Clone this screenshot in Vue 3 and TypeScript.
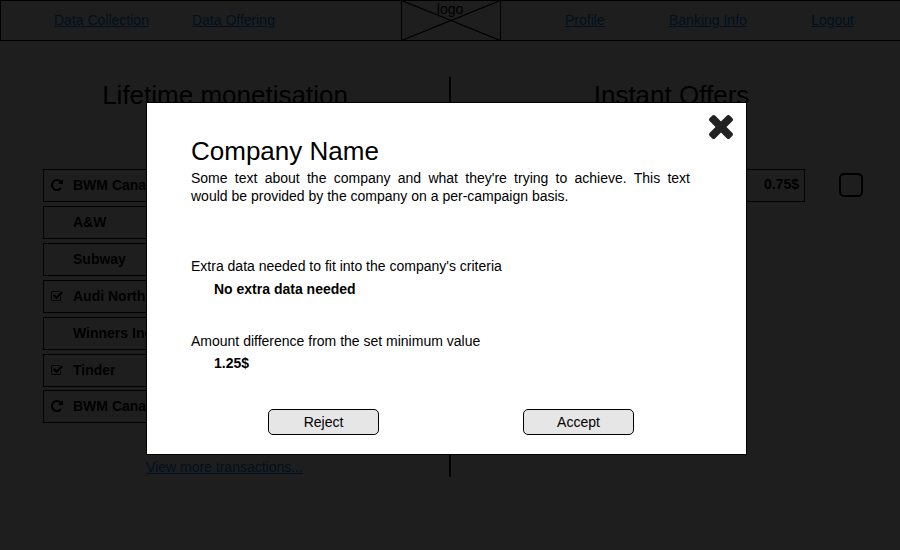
<script setup lang="ts">
import { ref } from 'vue'

type Status = 'repeat' | 'checked' | 'none'
interface Transaction {
  id: number
  name: string
  status: Status
}

const modalOpen = ref(true)

const transactions: Transaction[] = [
  { id: 1, name: 'BWM Canada', status: 'repeat' },
  { id: 2, name: 'A&W', status: 'none' },
  { id: 3, name: 'Subway', status: 'none' },
  { id: 4, name: 'Audi North', status: 'checked' },
  { id: 5, name: 'Winners Inc', status: 'none' },
  { id: 6, name: 'Tinder', status: 'checked' },
  { id: 7, name: 'BWM Canada', status: 'repeat' },
]
</script>

<template>
  <div class="page">
    <header class="topbar">
      <nav class="nav nav-left">
        <a href="#">Data Collection</a>
        <a href="#">Data Offering</a>
      </nav>
      <div class="logo">
        <svg class="logo-cross" viewBox="0 0 100 41" aria-hidden="true">
          <rect x="0.5" y="0.5" width="99" height="40" />
          <path d="M0.5 0.5L99.5 40.5M99.5 0.5L0.5 40.5" />
        </svg>
        <span class="logo-text">logo</span>
      </div>
      <nav class="nav nav-right">
        <a href="#">Profile</a>
        <a href="#">Banking Info</a>
        <a href="#">Logout</a>
      </nav>
    </header>

    <main class="columns">
      <section class="column lifetime">
        <h1>Lifetime monetisation</h1>
        <ul class="rows">
          <li v-for="t in transactions" :key="t.id" class="row">
            <span class="status">
              <svg v-if="t.status === 'repeat'" class="icon-repeat" viewBox="128 128 1536 1536">
                <path d="M1664 256v448q0 26-19 45t-45 19h-448q-42 0-59-40-17-39 14-69l138-138q-148-137-349-137-104 0-198.500 40.500t-163.500 109.500-109.500 163.500-40.500 198.500 40.500 198.500 109.500 163.500 163.500 109.500 198.500 40.500q119 0 225-52t179-147q7-10 23-12 15 0 25 9l137 138q9 8 9.500 20.500t-7.500 22.500q-109 132-264 204.500t-327 72.500q-156 0-298-61t-245-164-164-245-61-298 61-298 164-245 245-164 298-61q147 0 284.500 55.500t244.500 156.500l130-129q29-31 70-14 39 17 39 59z" />
              </svg>
              <svg v-else-if="t.status === 'checked'" class="icon-check" viewBox="64 128 1664 1408">
                <path d="M1472 930v318q0 119-84.500 203.500t-203.500 84.500h-832q-119 0-203.500-84.500t-84.500-203.500v-832q0-119 84.500-203.500t203.500-84.500h832q63 0 117 25 15 7 18 23 3 17-9 29l-49 49q-10 10-23 10-3 0-9-2-23-6-45-6h-832q-66 0-113 47t-47 113v832q0 66 47 113t113 47h832q66 0 113-47t47-113v-254q0-13 9-22l64-64q10-10 23-10 6 0 12 3 20 8 20 29zm231-489l-814 814q-24 24-57 24t-57-24l-430-430q-24-24-24-57t24-57l110-110q24-24 57-24t57 24l263 263 647-647q24-24 57-24t57 24l110 110q24 24 24 57t-24 57z" />
              </svg>
            </span>
            <span>{{ t.name }}</span>
          </li>
        </ul>
        <a class="more" href="#">View more transactions...</a>
      </section>

      <div class="divider"></div>

      <section class="column instant">
        <h1>Instant Offers</h1>
        <div class="offer">
          <div class="row offer-row">0.75$</div>
          <span class="checkbox"></span>
        </div>
      </section>
    </main>

    <div v-if="modalOpen" class="overlay">
      <div class="modal" role="dialog">
        <button class="close" aria-label="Close" @click="modalOpen = false">
          <svg viewBox="302 366 1188 1188">
            <path d="M1490 1322q0 40-28 68l-136 136q-28 28-68 28t-68-28l-294-294-294 294q-28 28-68 28t-68-28l-136-136q-28-28-28-68t28-68l294-294-294-294q-28-28-28-68t28-68l136-136q28-28 68-28t68 28l294 294 294-294q28-28 68-28t68 28l136 136q28 28 28 68t-28 68l-294 294 294 294q28 28 28 68z" />
          </svg>
        </button>
        <h2>Company Name</h2>
        <p class="about">
          Some text about the company and what they're trying to achieve. This text <span class="keep">would be</span> provided by the company on a per-campaign basis.
        </p>
        <dl>
          <dt>Extra data needed to fit into the company's criteria</dt>
          <dd>No extra data needed</dd>
          <dt>Amount difference from the set minimum value</dt>
          <dd class="amount">1.25$</dd>
        </dl>
        <div class="actions">
          <button class="btn">Reject</button>
          <button class="btn">Accept</button>
        </div>
      </div>
    </div>
  </div>
</template>

<style>
body {
  margin: 0;
  overflow: hidden;
}
</style>

<style scoped>
* {
  box-sizing: border-box;
}

.page {
  position: relative;
  width: 900px;
  height: 550px;
  overflow: hidden;
  background: #fff;
  color: #000;
  font: 14px/18px "Liberation Sans", Arial, sans-serif;
}

h1,
h2 {
  margin: 0;
  font-size: 26px;
  line-height: 30px;
  font-weight: 400;
}

a {
  color: #0088ff;
  text-decoration: underline;
}

.topbar {
  display: grid;
  grid-template-columns: 400px 100px 1fr;
  height: 41px;
  border: 1px solid #000;
  border-right: 0;
}

.nav {
  display: flex;
  align-items: center;
  height: 38px;
}

.nav-left {
  padding-left: 53px;
  gap: 43px;
}

.nav-right {
  padding: 0 46px 0 64px;
  justify-content: space-between;
}

.logo {
  position: relative;
  height: 41px;
  margin-top: -1px;
  text-align: center;
}

.logo-cross {
  position: absolute;
  inset: 0;
  width: 100px;
  height: 41px;
  fill: none;
  stroke: #000;
}

.logo-cross path {
  stroke-width: 1.3;
}

.logo-text {
  display: block;
  padding-right: 2px;
}

.columns {
  display: grid;
  grid-template-columns: 449px 2px 449px;
  padding-top: 36px;
}

.column {
  display: flex;
  flex-direction: column;
  padding-top: 3px;
}

.column h1 {
  text-align: center;
}

.instant h1 {
  padding-right: 8px;
}

.lifetime {
  padding-left: 43px;
}

.lifetime h1,
.more {
  margin-left: -43px;
  align-self: stretch;
  text-align: center;
}

.lifetime h1 {
  padding-left: 1px;
}

.divider {
  height: 400px;
  background: #000;
}

.rows {
  display: flex;
  flex-direction: column;
  gap: 4px;
  width: 362px;
  margin: 59px 0 0;
  padding: 0;
  list-style: none;
}

.row {
  display: flex;
  align-items: center;
  height: 33px;
  padding-bottom: 2px;
  border: 1px solid #000;
  font-weight: 700;
}

.rows .row:last-child {
  margin-top: -1px;
}

.status {
  display: flex;
  align-items: center;
  width: 29px;
  padding: 1px 0 0 7px;
}

.icon-repeat {
  width: 12px;
  height: 12px;
}

.icon-check {
  width: 12px;
  height: 10px;
}

.more {
  margin-top: 35px;
}

.offer {
  display: flex;
  align-items: flex-start;
  gap: 34px;
  margin: 59px 0 0 43px;
}

.offer-row {
  width: 311px;
  justify-content: flex-end;
  padding: 0 5px 3px 0;
}

.checkbox {
  width: 24px;
  height: 24px;
  margin-top: 4px;
  border: 2px solid #000;
  border-radius: 5px;
}

.overlay {
  position: absolute;
  inset: 0;
  padding: 102px 0 0 146px;
  background: rgba(0, 0, 0, 0.882);
}

.modal {
  position: relative;
  width: 601px;
  height: 353px;
  padding: 33px 56px 0 44px;
  border: 1px solid #000;
  background: #fff;
}

.close {
  position: absolute;
  top: 12px;
  right: 13px;
  width: 24px;
  height: 24px;
  padding: 0;
  border: 0;
  background: none;
}

.close svg {
  display: block;
  width: 24px;
  height: 24px;
  fill: #222;
}

.about {
  margin: 3px 0 0;
  text-align: justify;
}

.keep {
  white-space: nowrap;
}

dl {
  margin: 52px 0 0;
}

dd {
  margin: 5px 0 34px 23px;
  font-weight: 700;
}

dd.amount {
  margin: 4px 0 0 23px;
}

.actions {
  display: flex;
  gap: 144px;
  padding: 37px 0 0 77px;
}

.btn {
  width: 111px;
  height: 26px;
  padding: 0;
  border: 1px solid #000;
  border-radius: 5px;
  background: #e6e6e6;
  color: #000;
  font: inherit;
}
</style>
